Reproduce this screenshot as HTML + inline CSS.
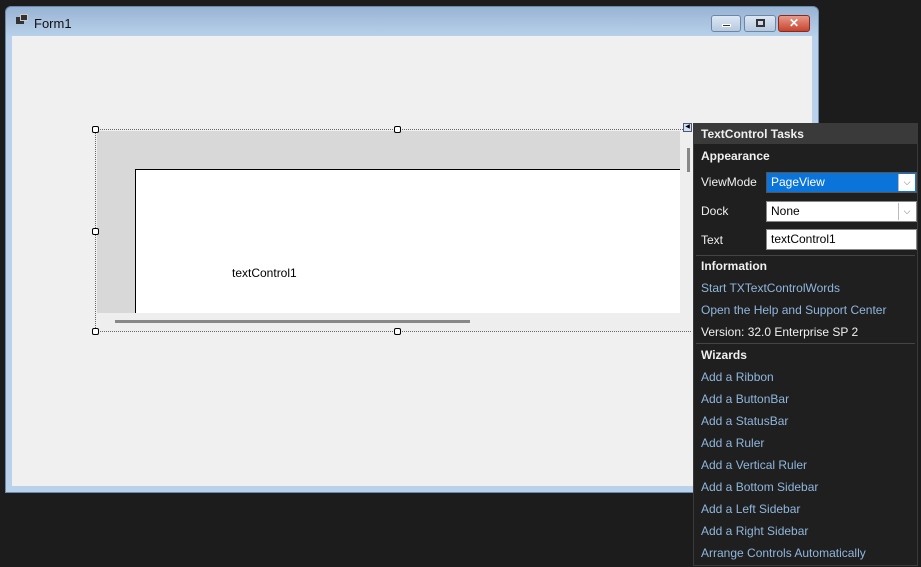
<!DOCTYPE html>
<html><head><meta charset="utf-8"><style>
*{margin:0;padding:0;box-sizing:border-box}
body{width:921px;height:567px;background:#1c1c1c;position:relative;overflow:hidden;font-family:"Liberation Sans",sans-serif}
.a{position:absolute}
.win{left:5px;top:6px;width:814px;height:487px;background:linear-gradient(#98b4d4,#b9d1ea 30px);border-radius:6px 6px 0 0;border:1px solid #6b8aad}
.client{left:12px;top:36px;width:800px;height:450px;background:#f0f0f0}
.btn{top:15px;height:17px;border:1px solid #6d86a6;border-radius:3px;background:linear-gradient(#dce7f4,#b7c9df)}
.h{width:7px;height:7px;border:1px solid #000;background:#fff;border-radius:2px}
.p{left:693px;top:123px;width:225px;height:443px;background:#1f1f1f;border:1px solid #3a3a3a;color:#f0f0f0;font-size:12px}
.p div{position:absolute;left:7px;white-space:nowrap}
.lk{color:#8fb6de}
.b{font-weight:bold}
.inp{position:absolute;left:72px;width:151px;height:21px;background:#fff;border:1px solid #888;color:#000;padding:2px 4px;font-size:12px}
.dd{position:absolute;right:1px;top:1px;width:17px;height:17px;border-left:1px solid #bbb;background:#fff;color:#666;font-size:9px;text-align:center;line-height:17px}
.sep{position:absolute;left:2px;right:2px;height:1px;background:#444}
</style></head><body>
<div class="a win"></div>
<div class="a" style="left:16px;top:17px;width:8px;height:7px;background:#333"></div>
<div class="a" style="left:20px;top:14px;width:8px;height:7px;background:#333;border:1px solid #ccc"></div>
<div class="a" style="left:34px;top:16px;font-size:13px;color:#111">Form1</div>
<div class="a btn" style="left:711px;width:30px"><div class="a" style="left:10px;top:8px;width:9px;height:3px;background:#333;border:1px solid #fff"></div></div>
<div class="a btn" style="left:744px;width:32px"><div class="a" style="left:11px;top:3px;width:9px;height:8px;border:2px solid #333"></div></div>
<div class="a btn" style="left:778px;width:32px;background:linear-gradient(#e89a8a,#c8432e);border-color:#8a2a1e;color:#fff;font-weight:bold;font-size:12px;text-align:center;line-height:15px">✕</div>
<div class="a client"></div>
<div class="a" style="left:95px;top:129px;width:596px;height:203px;border:1px dotted #666"></div>
<div class="a" style="left:97px;top:131px;width:583px;height:182px;background:#d8d8d8"></div>
<div class="a" style="left:135px;top:169px;width:545px;height:144px;background:#fff;border-top:1px solid #000;border-left:1px solid #000"></div>
<div class="a" style="left:232px;top:266px;font-size:12px;color:#000">textControl1</div>
<div class="a" style="left:97px;top:313px;width:594px;height:18px;background:#eee"></div>
<div class="a" style="left:680px;top:131px;width:11px;height:182px;background:#eee"></div>
<div class="a" style="left:687px;top:148px;width:3px;height:24px;background:#888"></div>
<div class="a" style="left:115px;top:320px;width:355px;height:3px;background:#888"></div>
<div class="a h" style="left:92px;top:126px"></div>
<div class="a h" style="left:394px;top:126px"></div>
<div class="a h" style="left:92px;top:228px"></div>
<div class="a h" style="left:92px;top:328px"></div>
<div class="a h" style="left:394px;top:328px"></div>
<div class="a" style="left:683px;top:123px;width:9px;height:9px;background:#cfe0f3;border:1px solid #557;font-size:6px;line-height:7px;text-align:center;color:#000">◀</div>
<div class="a p">
<div style="left:0;top:0;width:223px;height:20px;background:#3a3a3a"></div>
<div class="b" style="top:3px">TextControl Tasks</div>
<div class="b" style="top:25px">Appearance</div>
<div style="top:51px">ViewMode</div>
<div class="inp" style="top:48px;left:72px;background:#0a74da;color:#fff;border-color:#555">PageView<span class="dd">⌵</span></div>
<div style="top:80px">Dock</div>
<div class="inp" style="top:77px;left:72px">None<span class="dd">⌵</span></div>
<div style="top:109px">Text</div>
<div class="inp" style="top:105px;left:72px">textControl1</div>
<span class="sep" style="top:131px"></span>
<div class="b" style="top:135px">Information</div>
<div class="lk" style="top:157px">Start TXTextControlWords</div>
<div class="lk" style="top:179px">Open the Help and Support Center</div>
<div style="top:201px">Version: 32.0 Enterprise SP 2</div>
<span class="sep" style="top:219px"></span>
<div class="b" style="top:224px">Wizards</div>
<div class="lk" style="top:246px">Add a Ribbon</div>
<div class="lk" style="top:268px">Add a ButtonBar</div>
<div class="lk" style="top:290px">Add a StatusBar</div>
<div class="lk" style="top:312px">Add a Ruler</div>
<div class="lk" style="top:334px">Add a Vertical Ruler</div>
<div class="lk" style="top:356px">Add a Bottom Sidebar</div>
<div class="lk" style="top:378px">Add a Left Sidebar</div>
<div class="lk" style="top:400px">Add a Right Sidebar</div>
<div class="lk" style="top:422px">Arrange Controls Automatically</div>
</div>
</body></html>
